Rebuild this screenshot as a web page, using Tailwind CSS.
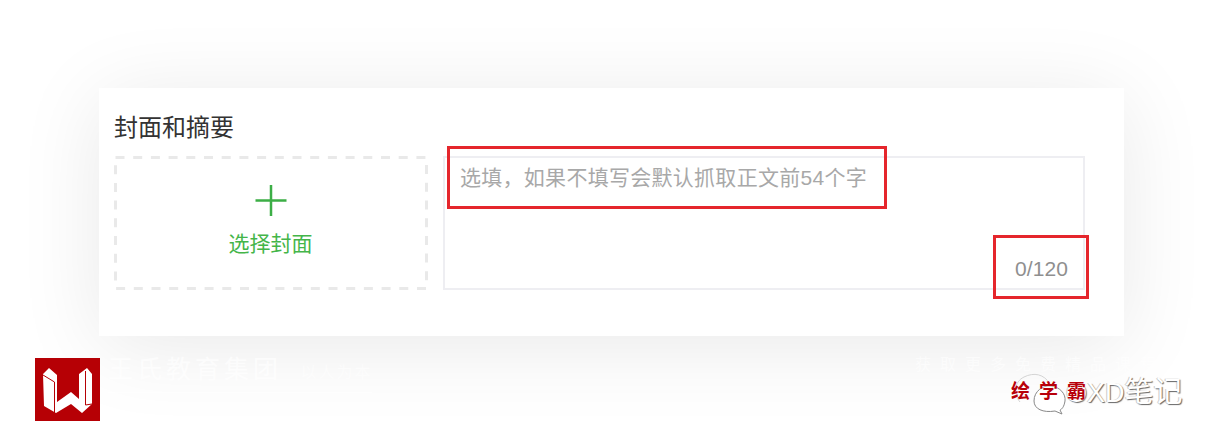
<!DOCTYPE html>
<html lang="zh-CN">
<head>
  <meta charset="UTF-8">
  <title>封面和摘要</title>
  <script src="https://cdn.jsdelivr.net/npm/@tailwindcss/browser@4"></script>
</head>
<body class="bg-white w-[1223px] h-[446px] overflow-hidden relative font-['Liberation_Sans','Noto_Sans_CJK_SC',sans-serif]">
  <!-- Card -->
  <div class="absolute left-0 top-0 w-full pl-[99px] pt-[88px]">
    <div class="w-[1025px] h-[248px] bg-white shadow-[0_10px_85px_rgba(0,0,0,0.09)] px-[15px] pt-[23px]">
      <h2 class="text-[24px] leading-[34px] text-[#333] font-normal">封面和摘要</h2>
      <div class="flex gap-[15px] mt-[11px]">
        <!-- Cover picker -->
        <div class="w-[314px] h-[134px] relative flex flex-col items-center pt-[29px]">
          <svg class="absolute inset-0" width="314" height="134" viewBox="0 0 314 134" fill="none">
            <rect x="1.5" y="1.5" width="311" height="131" stroke="#e9e9e9" stroke-width="3" stroke-dasharray="9 8.7"/>
          </svg>
          <svg width="32" height="32" viewBox="0 0 32 32" class="block"><path d="M0.5 15.5h31M16 0v31" stroke="#3cae46" stroke-width="2.5" fill="none"/></svg>
          <span class="text-[21px] leading-[30px] text-[#44b549] mt-[12px] -ml-[1px]">选择封面</span>
        </div>
        <!-- Digest -->
        <div class="w-[642px] h-[134px] border-2 border-[#eeeef2] relative pl-[15px] pt-[3px]">
          <p class="text-[21px] leading-[34px] tracking-[0.28px] text-[#a8a8a8]">选填，如果不填写会默认抓取正文前54个字</p>
          <span class="absolute right-[15px] bottom-[4px] text-[21px] leading-[30px] tracking-[0.1px] text-[#8f8f8f]">0/120</span>
        </div>
      </div>
    </div>
  </div>

  <!-- Red annotation boxes -->
  <div class="absolute left-[447px] top-[146px] w-[440px] h-[63px] border-[3px] border-[#e5262c]"></div>
  <div class="absolute left-[993px] top-[235px] w-[96px] h-[64px] border-[3px] border-[#e5262c]"></div>

  <!-- Logo -->
  <svg class="absolute left-[35px] top-[358px]" width="65" height="63" viewBox="0 0 65 63">
    <rect width="65" height="63" fill="#b60005"/>
    <path d="M8 16L14 10L22 17V44L36 34L44 41V16L52 10L57 16V46L47 55L36 46L21 55L9 48Z" fill="#fff"/>
    <path d="M8 17L19.5 24V55" stroke="#b60005" stroke-width="1" fill="none"/>
    <path d="M50.5 13V47L57 46" stroke="#b60005" stroke-width="1" fill="none"/>
  </svg>

  <!-- Faded watermark text -->
  <div class="absolute left-[108px] top-[352px] w-[264px] h-[41px] border-b border-white/60 whitespace-nowrap">
    <span class="text-[25px] leading-[34px] tracking-[4px] text-white/70">王氏教育集团</span>
    <span class="text-[16px] leading-[34px] tracking-[2px] ml-[14px] text-white/50">以人为本</span>
  </div>
  <div class="absolute left-[915px] top-[353px] text-[16px] leading-[24px] tracking-[9px] text-white/60 whitespace-nowrap">获取更多免费精品课程</div>
  <div class="absolute left-[915px] top-[408px] w-[190px] h-[10px] bg-white/30"></div>

  <!-- WeChat style watermark -->
  <svg class="absolute left-[1010px] top-[372px]" width="66" height="44" viewBox="0 0 66 44" fill="none">
    <path d="M10 30C3 22 4 10 14 5C24 0 34 2 40 12" stroke="#d4d4d4" stroke-width="1"/>
    <path d="M24 29C24 19 33 13 41 14C50 15 56 22 55 29C54 35 52 37 50 38L52 42L45 39C33 41 24 37 24 29Z" fill="#fff" stroke="#888" stroke-width="1"/>
  </svg>
  <div class="absolute left-[1066px] top-[374px] text-[27px] leading-[36px] text-white whitespace-nowrap [text-shadow:1px_1px_1px_#666,-1px_0_0_#ccc]">OXD<span class="text-[29px]">笔记</span></div>
  <div class="absolute left-[1011px] top-[380px] flex gap-[9px] text-[19px] leading-[24px] font-bold text-[#b8000a] [text-shadow:0_0_2px_#fff]">
    <span>绘</span><span>学</span><span>霸</span>
  </div>
</body>
</html>
